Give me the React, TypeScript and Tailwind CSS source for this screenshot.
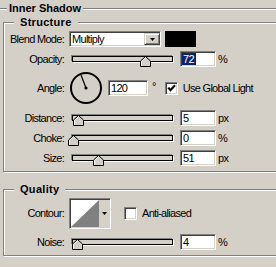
import React from "react";

const sunken =
  "border border-t-[#808080] border-l-[#808080] border-b-white border-r-white shadow-[inset_1px_1px_0_#404040,inset_-1px_-1px_0_#d4d0c8]";
const raised =
  "border border-t-[#d4d0c8] border-l-[#d4d0c8] border-b-[#404040] border-r-[#404040] shadow-[inset_1px_1px_0_#fff,inset_-1px_-1px_0_#808080]";
const etched =
  "border border-[#808080] shadow-[inset_1px_1px_0_#fff,1px_1px_0_#fff]";

function Label({ children }: { children: React.ReactNode }) {
  return <div className="w-[60px] shrink-0 text-right leading-[13px]">{children}</div>;
}

function Slider({ thumb }: { thumb: number }) {
  return (
    <div className="relative ml-[5px] h-[16px] w-[104px] shrink-0">
      <div className="ml-[3px] mt-[5px] h-[6px] w-[101px] border border-black bg-[#d4d0c8] shadow-[-1px_-1px_0_#808080,1px_1px_0_#fff]" />
      <svg
        className="absolute top-[5px]"
        style={{ left: thumb }}
        width="11"
        height="11"
        viewBox="0 0 11 11"
      >
        <path d="M5.5 0.5 L10.5 5 L10.5 10.5 L0.5 10.5 L0.5 5 Z" fill="#d4d0c8" stroke="#000" />
        <path d="M1.5 10 L1.5 5.4 L5.5 1.8" fill="none" stroke="#fff" />
      </svg>
    </div>
  );
}

function NumBox({
  value,
  w,
  selected,
  className,
}: {
  value: string;
  w: string;
  selected?: boolean;
  className?: string;
}) {
  return (
    <div className={`${sunken} ${w} ${className ?? ""} flex h-[16px] shrink-0 items-center bg-white pl-[1px]`}>
      {selected ? (
        <span className="flex h-[12px] items-center bg-[#0a246a] pl-[1px] pr-[2px] leading-[12px] text-white">
          {value}
        </span>
      ) : (
        <span className="pl-[1px] leading-[12px]">{value}</span>
      )}
    </div>
  );
}

function Check({ checked }: { checked?: boolean }) {
  return (
    <div className={`${sunken} h-[13px] w-[13px] shrink-0 bg-white`}>
      {checked && (
        <svg width="11" height="11" viewBox="0 0 11 11" className="block">
          <path d="M2.3 4.6 L4.5 7.2 L9 2.2" fill="none" stroke="#000" strokeWidth="2.2" />
        </svg>
      )}
    </div>
  );
}

function SliderRow({
  label,
  thumb,
  value,
  unit,
  selected,
}: {
  label: string;
  thumb: number;
  value: string;
  unit: string;
  selected?: boolean;
}) {
  return (
    <div className="flex h-[16px] items-center">
      <Label>{label}</Label>
      <Slider thumb={thumb} />
      <NumBox value={value} w="w-[36px]" selected={selected} className="ml-[7px]" />
      <span className="ml-[2px] leading-[13px]">{unit}</span>
    </div>
  );
}

export default function App() {
  return (
    <div className="h-[267px] w-[276px] overflow-hidden bg-[#d4d0c8] font-['Liberation_Sans',sans-serif] text-[11px] tracking-[-0.7px] text-black">
      <fieldset className={`${etched} ml-[-2px] mt-[2px] h-[300px] w-[300px]`}>
        <legend className="ml-[8px] bg-[#d4d0c8] px-[2px] text-[11px] font-bold leading-[13px] tracking-normal">
          Inner Shadow
        </legend>

        <fieldset className={`${etched} ml-[4px] mt-[1px] h-[156px] w-[290px]`}>
          <legend className="ml-[10px] bg-[#d4d0c8] px-[6px] font-bold leading-[13px] tracking-[0.3px]">
            Structure
          </legend>
          <div className="flex flex-col pt-[2px]">
            <div className="flex h-[16px] items-center">
              <Label>Blend Mode:</Label>
              <div className={`${sunken} ml-[5px] flex h-[16px] w-[92px] items-center bg-white`}>
                <span className="flex-1 pl-[2px] leading-[12px]">Multiply</span>
                <div className={`${raised} flex h-[12px] w-[16px] items-center justify-center bg-[#d4d0c8]`}>
                  <svg width="5" height="3" viewBox="0 0 5 3" className="block">
                    <path d="M0 0 H5 L2.5 3 Z" fill="#000" />
                  </svg>
                </div>
              </div>
              <div className="ml-[4px] h-[16px] w-[31px] bg-black" />
            </div>

            <div className="mt-[4px]">
              <SliderRow label="Opacity:" thumb={71} value="72" unit="%" selected />
            </div>

            <div className="mt-[4px] flex h-[34px] items-center">
              <Label>Angle:</Label>
              <svg width="34" height="34" viewBox="0 0 34 34" className="ml-[5px] block shrink-0">
                <circle cx="17" cy="17" r="15" fill="none" stroke="#000" strokeWidth="2" />
                <line x1="17" y1="17" x2="12" y2="4" stroke="#000" strokeWidth="1.2" />
                <circle cx="17" cy="17" r="1.6" fill="#000" />
              </svg>
              <NumBox value="120" w="w-[40px]" className="ml-[5px]" />
              <span className="mb-[4px] ml-[4px] leading-[13px]">°</span>
              <div className="ml-[9px]">
                <Check checked />
              </div>
              <span className="ml-[5px] leading-[13px]">Use Global Light</span>
            </div>

            <div className="mt-[5px]">
              <SliderRow label="Distance:" thumb={4} value="5" unit="px" />
            </div>
            <div className="mt-[4px]">
              <SliderRow label="Choke:" thumb={-1} value="0" unit="%" />
            </div>
            <div className="mt-[4px]">
              <SliderRow label="Size:" thumb={24} value="51" unit="px" />
            </div>
          </div>
        </fieldset>

        <fieldset className={`${etched} ml-[4px] mt-[11px] h-[73px] w-[290px]`}>
          <legend className="ml-[10px] bg-[#d4d0c8] px-[6px] font-bold leading-[13px] tracking-[0.3px]">
            Quality
          </legend>
          <div className="flex flex-col pt-[2px]">
            <div className="flex h-[31px] items-center">
              <Label>Contour:</Label>
              <div className={`${sunken} ml-[5px] flex h-[31px] w-[42px] shrink-0 bg-white p-[1px]`}>
                <svg width="28" height="27" viewBox="0 0 28 27" className="block shrink-0">
                  <rect width="28" height="27" fill="#fff" />
                  <path d="M0 27 L28 0 L28 27 Z" fill="#808080" />
                </svg>
                <div className="flex h-[27px] w-[10px] items-center justify-center bg-[#d4d0c8]">
                  <svg width="5" height="3" viewBox="0 0 5 3" className="block">
                    <path d="M0 0 H5 L2.5 3 Z" fill="#000" />
                  </svg>
                </div>
              </div>
              <div className="ml-[13px]">
                <Check />
              </div>
              <span className="ml-[5px] leading-[13px]">Anti-aliased</span>
            </div>
            <div className="mt-[5px]">
              <SliderRow label="Noise:" thumb={3} value="4" unit="%" />
            </div>
          </div>
        </fieldset>
      </fieldset>
    </div>
  );
}
